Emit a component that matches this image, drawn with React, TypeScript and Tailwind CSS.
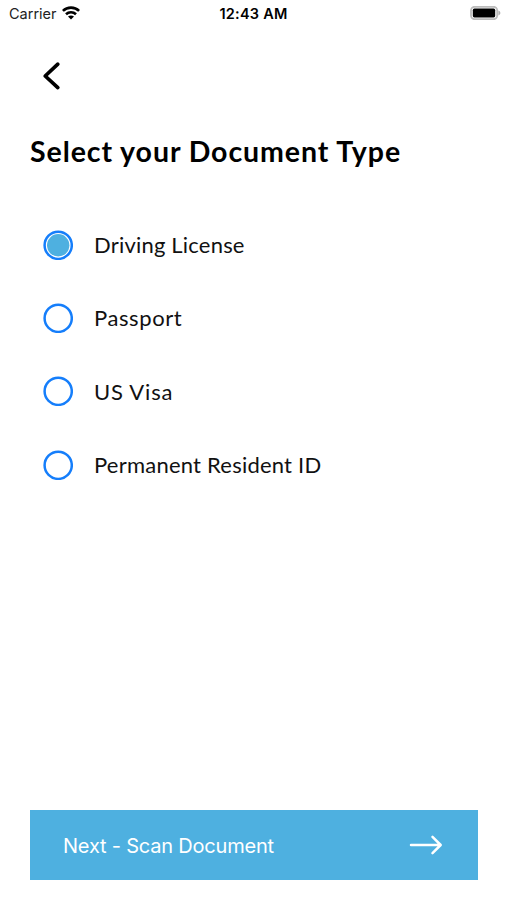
import { useState } from "react";

const documentTypes = [
  { label: "Driving License", className: "tracking-[0.2px]" },
  { label: "Passport", className: "tracking-[0.6px]" },
  { label: "US Visa", className: "tracking-[0.8px]" },
  { label: "Permanent Resident ID", className: "tracking-[0.22px]" },
];

function WifiIcon() {
  return (
    <svg width="18" height="14" viewBox="0 0 18 14" fill="none" stroke="#000" strokeWidth="2.6" className="mb-0.5" aria-hidden="true">
      <path d="M0.9 4.9C5.4 0.5 12.6 0.5 17.1 4.9" />
      <path d="M4 8.3C6.8 5.6 11.2 5.6 14 8.3" />
      <path d="M9 13.6L6 10.6C7.7 9.2 10.3 9.2 12 10.6Z" fill="#000" stroke="none" />
    </svg>
  );
}

function BatteryIcon() {
  return (
    <svg width="31" height="14" viewBox="0 0 31 14" className="mb-0.5" aria-hidden="true">
      <rect x="1" y="0.8" width="26.2" height="12.4" rx="3.6" fill="#fff" stroke="#bcbcbc" strokeWidth="1.8" />
      <rect x="2.8" y="2.6" width="22.4" height="8.8" rx="1.6" fill="#000" />
      <path d="M28.4 4.6C31 5.4 31 8.6 28.4 9.4Z" fill="#b0b0b0" />
    </svg>
  );
}

function StatusBar() {
  return (
    <div className="grid h-[27px] grid-cols-3 items-center pr-[6px] pl-[9px] font-['Inter',sans-serif] leading-7 text-black">
      <div className="flex items-center gap-[5px]">
        <span className="text-[14.5px] text-[#222]">Carrier</span>
        <WifiIcon />
      </div>
      <span className="pr-[3px] text-center text-[14.5px] font-semibold tracking-[0.25px] whitespace-nowrap">12:43 AM</span>
      <div className="flex justify-end">
        <BatteryIcon />
      </div>
    </div>
  );
}

function Radio({ checked }: { checked: boolean }) {
  return (
    <svg width="30" height="30" viewBox="0 0 30 30" className="shrink-0" aria-hidden="true">
      <circle cx="15.2" cy="15.3" r="13.6" fill="#fff" stroke="#157efb" strokeWidth="2.5" />
      {checked && <circle cx="15.2" cy="15.3" r="11.2" fill="#4eb0e0" />}
    </svg>
  );
}

export default function App() {
  const [selected, setSelected] = useState("Driving License");

  return (
    <main className="flex h-[900px] w-[507px] flex-col overflow-hidden bg-white font-['Lato',sans-serif] text-black">
      <StatusBar />
      <button type="button" aria-label="Back" className="mt-[33px] ml-[42px] w-5">
        <svg width="20" height="32" viewBox="0 0 20 32" fill="none" stroke="#000" strokeWidth="3.7" strokeLinecap="round" strokeLinejoin="round">
          <path d="M15.8 4.2L3.2 16L15.8 27.6" />
        </svg>
      </button>
      <h1 className="mt-[39px] ml-[30px] text-[28.5px] leading-10 font-bold tracking-[0.92px] whitespace-nowrap">Select your Document Type</h1>
      <div role="radiogroup" className="mt-[37px] ml-[43px] flex flex-col">
        {documentTypes.map(({ label, className }) => (
          <button
            key={label}
            type="button"
            role="radio"
            aria-checked={selected === label}
            onClick={() => setSelected(label)}
            className="flex h-[73.33px] items-center gap-[21px] text-left text-[22px] text-[#111]"
          >
            <Radio checked={selected === label} />
            <span className={`whitespace-nowrap ${className}`}>{label}</span>
          </button>
        ))}
      </div>
      <button type="button" className="mt-auto mr-[29px] mb-5 ml-[30px] flex h-[70px] items-center justify-between bg-[#4eb0e0] pr-[35px] pl-[33px] text-white">
        <span className="pt-0.5 font-['Inter',sans-serif] text-[20px] tracking-[-0.2px]">Next - Scan Document</span>
        <svg width="34" height="22" viewBox="0 0 34 22" fill="none" stroke="#fff" strokeWidth="2.5" strokeLinecap="round" strokeLinejoin="round" aria-hidden="true">
          <path d="M2 11H31.5M23.5 2.8L31.7 11L23.5 19.2" />
        </svg>
      </button>
    </main>
  );
}
